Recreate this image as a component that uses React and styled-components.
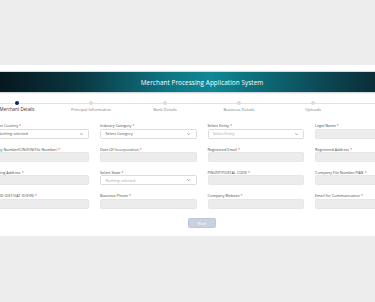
import React from 'react';
import styled, { createGlobalStyle } from 'styled-components';

const GlobalStyle = createGlobalStyle`
  html, body {
    margin: 0;
    padding: 0;
    background: #ededed;
    font-family: 'Open Sans', 'Liberation Sans', sans-serif;
  }
  * {
    box-sizing: border-box;
  }
`;

const StyledPage = styled.div`
  padding-top: 65px;
`;

const StyledPanel = styled.div`
  width: 100%;
  overflow: hidden;
  background: #fff;
`;

const StyledInner = styled.div`
  width: 444px;
  margin-left: -20px;
  padding: 7px 0 8px;
`;

const StyledHeader = styled.div`
  display: flex;
  align-items: center;
  justify-content: center;
  height: 20px;
  background: linear-gradient(
    90deg,
    #050f16 0%,
    #0a3640 22%,
    #0e7482 42%,
    #0f8795 52%,
    #0c5a66 70%,
    #0a2f39 88%,
    #081c24 100%
  );
  box-shadow: 0 0 0 1px #d4d9db, 0 1px 2px rgba(0, 0, 0, 0.15);

  h1 {
    margin: 0;
    font-size: 6.4px;
    font-weight: 400;
    letter-spacing: 0.05px;
    color: #fff;
  }
`;

const StyledStepper = styled.ol`
  position: relative;
  display: grid;
  grid-template-columns: repeat(6, 74px);
  margin: 0;
  padding: 8.5px 0 0;
  list-style: none;

  &::before {
    content: '';
    position: absolute;
    top: 10.6px;
    left: 0;
    right: 0;
    height: 0.6px;
    background: #e2e2e2;
  }
`;

const StyledStep = styled.li`
  position: relative;
  display: flex;
  flex-direction: column;
  align-items: center;
  gap: 2.2px;

  span {
    width: ${({ $active }) => ($active ? '4.6px' : '4px')};
    height: ${({ $active }) => ($active ? '4.6px' : '4px')};
    margin-top: ${({ $active }) => ($active ? '0' : '0.3px')};
    border-radius: 50%;
    background: ${({ $active }) => ($active ? '#0b2566' : '#dcdcdc')};
  }

  p {
    margin: 0;
    font-size: ${({ $active }) => ($active ? '4.4px' : '4.1px')};
    line-height: 5px;
    white-space: nowrap;
    color: ${({ $active }) => ($active ? '#2e2e2e' : '#7a7a7a')};
  }
`;

const StyledForm = styled.div`
  display: grid;
  grid-template-columns: repeat(4, 1fr);
  column-gap: 11px;
  row-gap: 7.8px;
  padding: 11px 12.5px 0;
`;

const StyledField = styled.div`
  display: flex;
  flex-direction: column;
  gap: 0.5px;
  min-width: 0;

  label {
    font-size: 3.8px;
    line-height: 5px;
    white-space: nowrap;
    color: #4a4a4a;
  }

  label em {
    font-style: normal;
    color: #e53935;
  }
`;

const StyledInput = styled.div`
  height: 10px;
  border-radius: 1.5px;
  background: #ececec;
  border: 0.5px solid #e6e6e6;
`;

const StyledSelect = styled.div`
  display: flex;
  align-items: center;
  justify-content: space-between;
  height: 10px;
  padding: 0 5px 0 4.5px;
  border-radius: 1.5px;
  border: 0.5px solid #dcdcdc;
  background: #fff;
  font-size: 3.8px;
  color: ${({ $muted }) => ($muted ? '#a8a8a8' : '#555')};

  svg {
    width: 3.4px;
    height: 2.2px;
  }
`;

const StyledActions = styled.div`
  display: flex;
  justify-content: center;
  padding-top: 9.5px;
`;

const StyledButton = styled.button`
  width: 28px;
  height: 10px;
  padding: 0;
  border: 0.5px solid #bcc8da;
  border-radius: 1.5px;
  background: #c7d1e0;
  font-family: inherit;
  font-size: 3.8px;
  color: #fff;
`;

const steps = [
  'Merchant Details',
  'Principal Information',
  'Bank Details',
  'Business Details',
  'Uploads',
];

const fields = [
  { label: 'Select Country', type: 'select', value: 'Nothing selected' },
  { label: 'Industry Category', type: 'select', value: 'Select Category' },
  { label: 'Select Entity', type: 'select', value: 'Select Entity', muted: true },
  { label: 'Legal Name' },
  { label: 'Entity Number(CIN/EIN/File Number)' },
  { label: 'Date Of Incorporation' },
  { label: 'Registered Email' },
  { label: 'Registered Address' },
  { label: 'Mailing Address' },
  { label: 'Select State', type: 'select', value: 'Nothing selected', muted: true },
  { label: 'PIN/ZIP/POSTAL CODE' },
  { label: 'Company File Number/PAN' },
  { label: 'Tax ID (GST/VAT ID/EIN)' },
  { label: 'Business Phone' },
  { label: 'Company Website' },
  { label: 'Email for Communication' },
];

const Chevron = () => (
  <svg viewBox="0 0 10 6" fill="none">
    <path d="M1 1l4 4 4-4" stroke="#555" strokeWidth="1.4" strokeLinecap="round" strokeLinejoin="round" />
  </svg>
);

const App = () => (
  <>
    <GlobalStyle />
    <StyledPage>
      <StyledPanel>
        <StyledInner>
          <StyledHeader>
            <h1>Merchant Processing Application System</h1>
          </StyledHeader>
          <StyledStepper>
            {steps.map((step, i) => (
              <StyledStep key={step} $active={i === 0}>
                <span />
                <p>{step}</p>
              </StyledStep>
            ))}
          </StyledStepper>
          <StyledForm>
            {fields.map((field) => (
              <StyledField key={field.label}>
                <label>
                  {field.label} <em>*</em>
                </label>
                {field.type === 'select' ? (
                  <StyledSelect $muted={field.muted}>
                    {field.value}
                    <Chevron />
                  </StyledSelect>
                ) : (
                  <StyledInput />
                )}
              </StyledField>
            ))}
          </StyledForm>
          <StyledActions>
            <StyledButton>Next</StyledButton>
          </StyledActions>
        </StyledInner>
      </StyledPanel>
    </StyledPage>
  </>
);

export default App;
